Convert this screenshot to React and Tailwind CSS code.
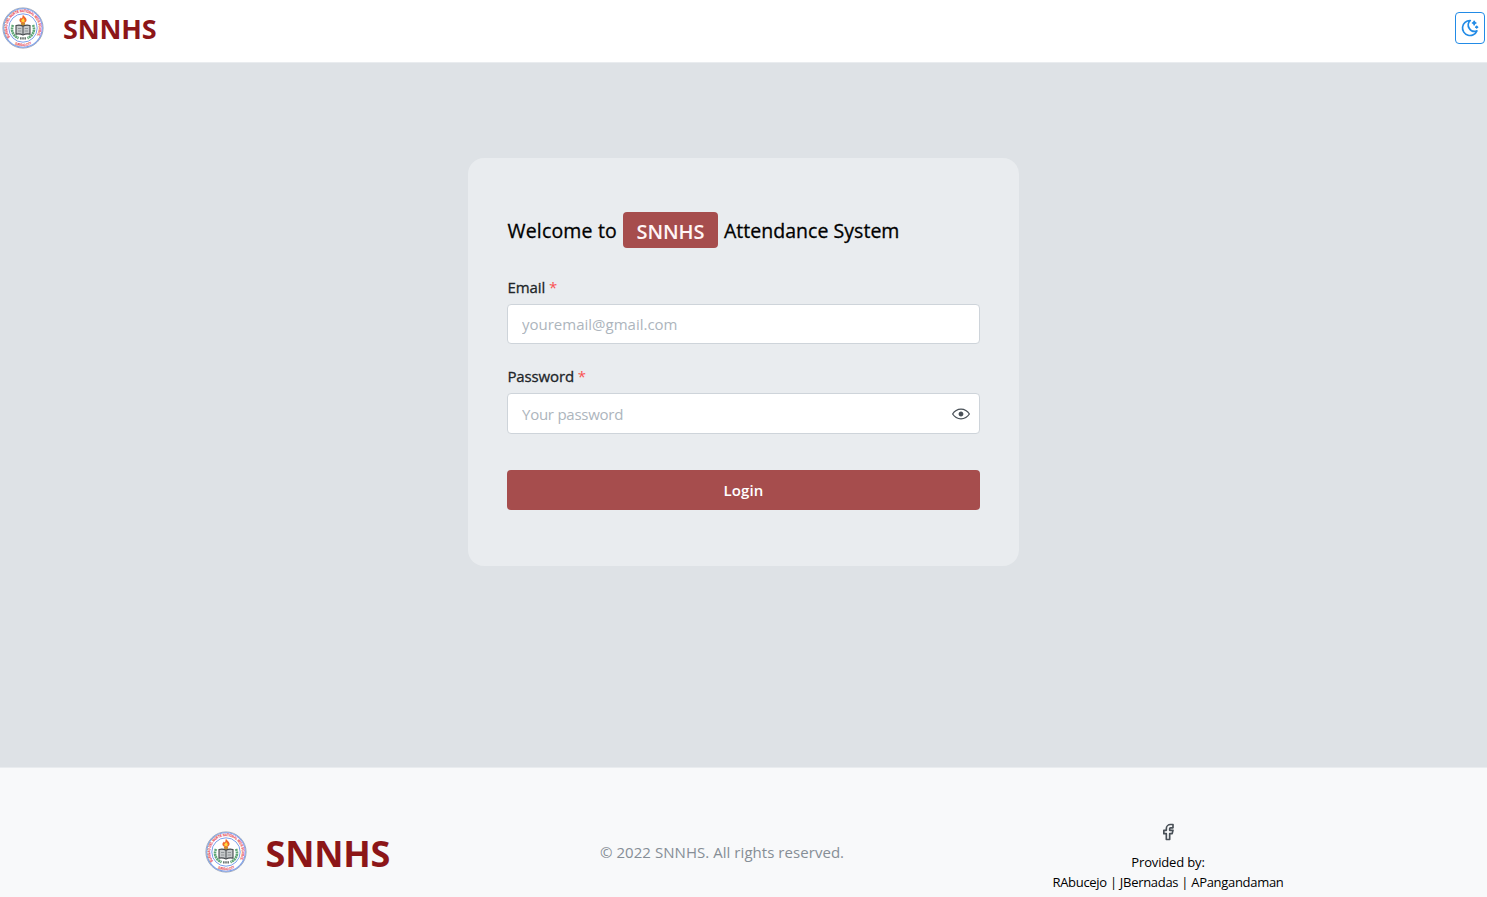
import { TbBrandFacebook, TbMoonStars } from "react-icons/tb";

function Seal({ id }) {
  return (
    <svg viewBox="0 0 42 42" className="size-[42px] shrink-0">
      <defs>
        <path id={id + "-top"} d="M8.2 30.3A15.8 15.8 0 1 1 33.8 30.3" />
        <path id={id + "-bottom"} d="M10.600 36A18.2 18.2 0 0 0 31.400 36" />
      </defs>
      <circle cx="21" cy="21" r="20.1" fill="#fff" stroke="#98a0b0" strokeWidth=".9" />
      <circle cx="21" cy="21" r="19.2" fill="none" stroke="#7ba0ec" strokeWidth="1.1" />
      <circle cx="21" cy="21" r="14.2" fill="#fff" stroke="#7ba0ec" strokeWidth="1" />
      <g fill="#e8404a" stroke="#e8404a" strokeWidth=".1" fontFamily="Liberation Sans, sans-serif" fontWeight="700">
        <text fontSize="3.8">
          <textPath href={"#" + id + "-top"} textLength="67" lengthAdjust="spacingAndGlyphs">SURIGAO DEL NORTE NATIONAL HIGH SCHOOL</textPath>
        </text>
        <text fontSize="3.6">
          <textPath href={"#" + id + "-bottom"} startOffset="2.500" textLength="17.500" lengthAdjust="spacingAndGlyphs">SURIGAO CITY</textPath>
        </text>
      </g>
      <path d="M11 18C8.600 23 10.600 28.500 16.500 31.200M31 18C33.400 23 31.400 28.500 25.500 31.200" fill="none" stroke="#5fa777" strokeWidth="2.600" strokeDasharray="2 .5" />
      <path d="M18.800 15.500h4.400l-1 5.500h-2.400z" fill="#c98a2c" />
      <path d="M21 7.400c.5 2 4.200 3.200 3.500 6.200-.3 1.600-1.800 2.500-3.500 2.500s-3.500-1-3.600-2.800c-.1-1.300 1-1.900 1.500-2.800.3.500.6.800.9 1 .8-1.200.7-2.700 1.200-4.100z" fill="#f0642a" />
      <path d="M21.100 10.800c.3 1.200 1.900 1.800 1.600 3.100-.2.800-.8 1.300-1.700 1.300s-1.800-.5-1.800-1.400c0-.9 1.700-1.700 1.900-3z" fill="#ffd83a" />
      <path d="M14 18.500c2.700-.7 5-.4 7 .7 2-1.100 4.300-1.400 7-.7v8.600c-2.700-.5-5-.2-7 .8-2-1-4.300-1.300-7-.8z" fill="#c6c9cb" stroke="#44484c" strokeWidth="1.100" />
      <path d="M21 19.300v8" stroke="#44484c" strokeWidth="1" />
      <path d="M16 21.500h3.300M16 24h3.300M22.700 21.500h3.300M22.700 24h3.300" stroke="#8a8e92" strokeWidth=".9" />
      <path d="M18 31.300h6" stroke="#6b7470" strokeWidth="2.300" strokeDasharray="1.200 .4" />
    </svg>
  );
}

function EyeIcon() {
  return (
    <svg width="18" height="18" viewBox="0 0 15 15" fill="none">
      <path
        d="M7.5 11C4.80285 11 2.52952 9.62184 1.09622 7.50001C2.52952 5.37816 4.80285 4 7.5 4C10.1971 4 12.4705 5.37816 13.9038 7.50001C12.4705 9.62183 10.1971 11 7.5 11ZM7.5 3C4.30786 3 1.65639 4.70638 0.0760002 7.23501C-0.0253338 7.39715 -0.0253334 7.60288 0.0760014 7.76501C1.65639 10.2936 4.30786 12 7.5 12C10.6921 12 13.3436 10.2936 14.924 7.76501C15.0253 7.60288 15.0253 7.39715 14.924 7.23501C13.3436 4.70638 10.6921 3 7.5 3ZM7.5 9.5C8.60457 9.5 9.5 8.60457 9.5 7.5C9.5 6.39543 8.60457 5.5 7.5 5.5C6.39543 5.5 5.5 6.39543 5.5 7.5C5.5 8.60457 6.39543 9.5 7.5 9.5Z"
        fill="currentColor"
        fillRule="evenodd"
        clipRule="evenodd"
      />
    </svg>
  );
}

export default function App() {
  return (
    <div className="flex h-[897px] flex-col overflow-hidden bg-[#dee2e6] font-['Open_Sans','Noto_Sans',sans-serif] text-black">
      <header className="flex h-[63px] shrink-0 items-start justify-between border-b border-[#e9ecef] bg-white pt-[7px] pr-[2px] pl-[2px]">
        <div className="flex items-center">
          <Seal id="header-seal" />
          <span className="ml-[19px] pt-[2px] text-[27px] leading-[40px] font-bold tracking-[-0.2px] text-[#8c1618]">SNNHS</span>
        </div>
        <button className="mt-[5px] flex h-8 w-[30px] items-center justify-center rounded border border-[#228be6] text-[#228be6]">
          <TbMoonStars size={20} />
        </button>
      </header>

      <main className="flex flex-1 justify-center pt-[95px]">
        <form className="flex h-[408px] w-[551px] flex-col rounded-[16px] bg-[#e9ecef] px-[39px] pt-[54px]">
          <h1 className="flex h-9 items-center text-[19.5px] font-medium whitespace-nowrap [-webkit-text-stroke:0.3px]">
            <span className="w-[110px] pt-[2px] pl-[0.5px] tracking-[0.18px]">Welcome to</span>
            <span className="mx-[6px] flex h-9 w-[95px] items-center justify-center rounded bg-[#a64d4d] pt-[3px] text-[20px] font-semibold tracking-[-0.05px] text-[#fff5f5] [-webkit-text-stroke:0]">SNNHS</span>
            <span className="pt-[2px] tracking-[0.03px]">Attendance System</span>
          </h1>

          <label className="mt-[27px] h-[24px] pl-[0.5px] text-[15px] leading-[24px] font-medium tracking-[-0.1px] text-[#212529] [-webkit-text-stroke:0.3px]">
            Email <span className="text-[#fa5252] [-webkit-text-stroke:0]">*</span>
          </label>
          <div className="mt-[5px] flex h-10 items-center rounded border border-[#ced4da] bg-white px-[14px]">
            <input className="w-full text-[15px] outline-none placeholder:text-[#adb5bd]" placeholder="youremail@gmail.com" />
          </div>

          <label className="mt-[20px] h-[24px] pl-[0.5px] text-[15px] leading-[24px] font-medium tracking-[-0.15px] text-[#212529] [-webkit-text-stroke:0.3px]">
            Password <span className="text-[#fa5252] [-webkit-text-stroke:0]">*</span>
          </label>
          <div className="mt-[5px] flex h-[41px] items-center rounded border border-[#ced4da] bg-white pr-[9.5px] pl-[14px]">
            <input type="password" className="w-full pt-px text-[15px] tracking-[-0.25px] outline-none placeholder:text-[#adb5bd]" placeholder="Your password" />
            <span className="text-[#495057]"><EyeIcon /></span>
          </div>

          <button className="mt-[36px] h-10 rounded bg-[#a64d4d] text-[15px] font-semibold tracking-[0.15px] text-white">Login</button>
        </form>
      </main>

      <footer className="flex h-[130px] shrink-0 items-start border-t border-[#e9ecef] bg-[#f8f9fa] pl-[205px]">
        <div className="mt-[63px] flex h-[42px] w-[395px] items-center">
          <Seal id="footer-seal" />
          <span className="ml-[18.5px] pt-[4px] text-[36px] leading-[42px] font-bold tracking-[-0.2px] text-[#8c1618]">SNNHS</span>
        </div>
        <p className="mt-[72px] w-[244px] text-[15px] leading-[25px] tracking-[0.05px] whitespace-nowrap text-[#868e96]">© 2022 SNNHS. All rights reserved.</p>
        <div className="mt-[54px] ml-[208px] flex w-[232px] flex-col items-center text-[13px] leading-5 tracking-[-0.3px] whitespace-nowrap">
          <TbBrandFacebook size={20} className="mb-[10px] text-[#495057]" />
          <span className="tracking-[-0.15px]">Provided by:</span>
          <span>RAbucejo | JBernadas | APangandaman</span>
        </div>
      </footer>
    </div>
  );
}
